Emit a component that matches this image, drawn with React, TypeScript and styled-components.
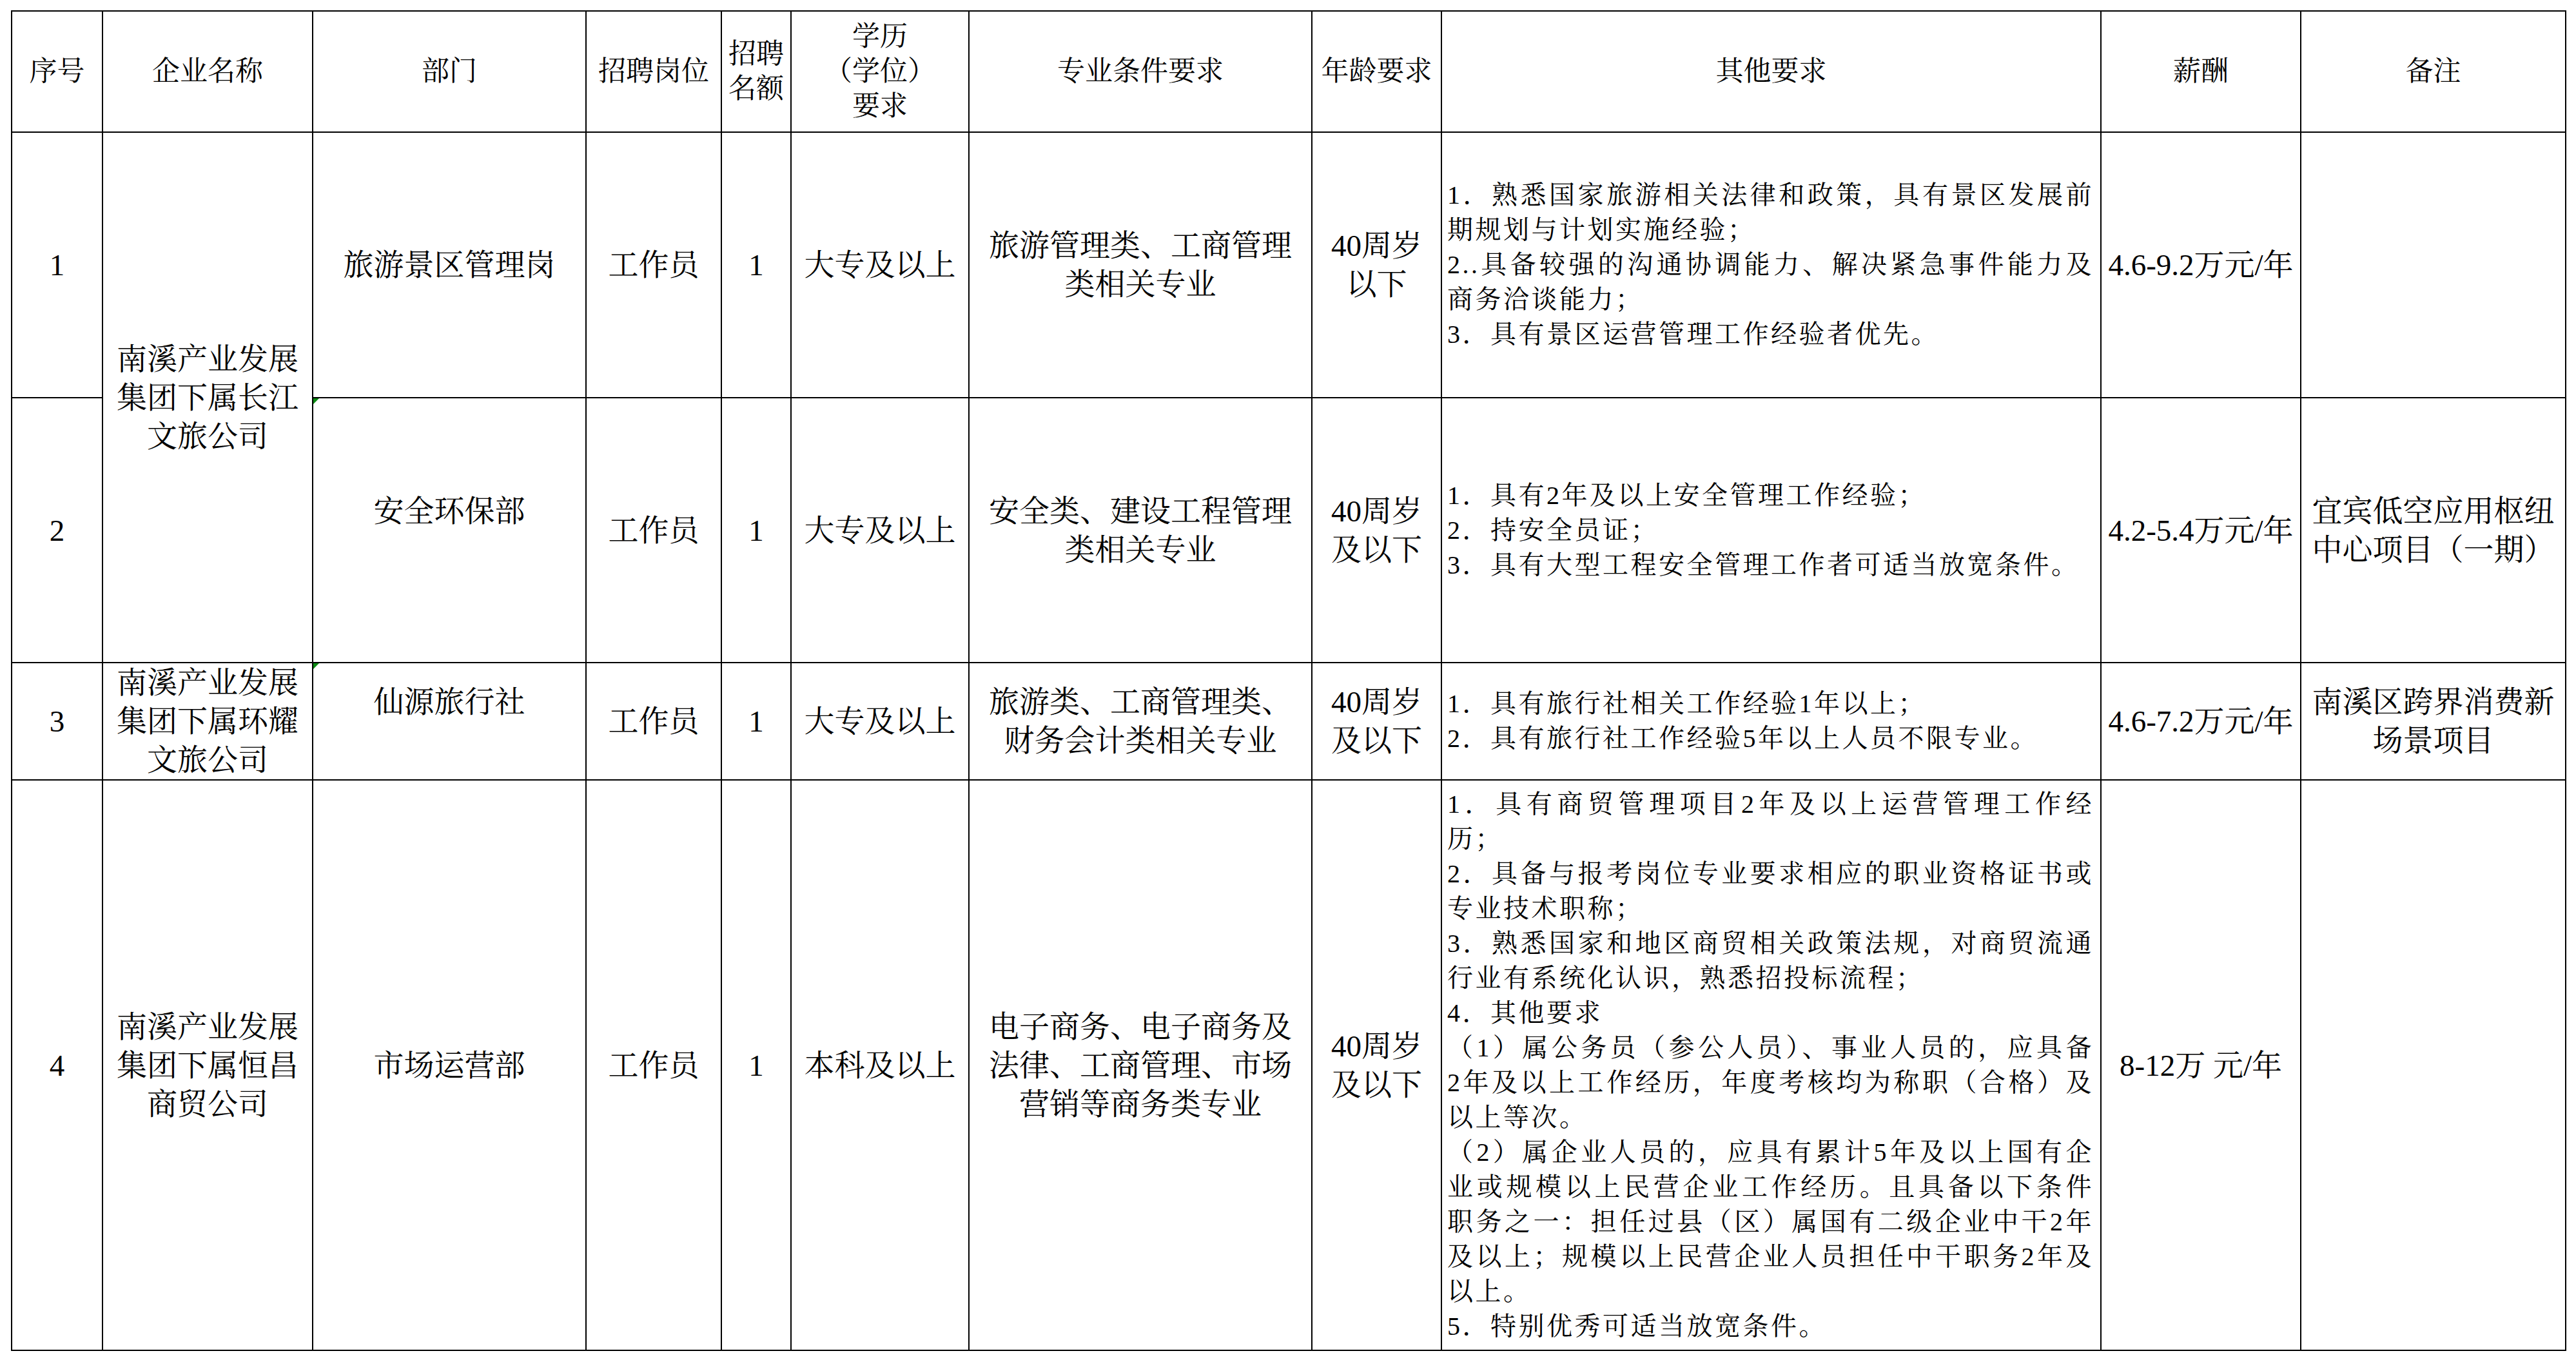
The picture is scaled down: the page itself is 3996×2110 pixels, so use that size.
import React from 'react';
import styled, { createGlobalStyle, css } from 'styled-components';

const GlobalStyle = createGlobalStyle`
  html, body {
    margin: 0;
    padding: 0;
    background: #fff;
  }
  body {
    font-family: 'Liberation Serif', 'Noto Serif CJK SC', 'Noto Sans CJK SC', serif;
    color: #000;
  }
`;

const Page = styled.div`
  width: 3996px;
  box-sizing: border-box;
  padding: 16px 17px;
`;

const Sheet = styled.table`
  border-collapse: collapse;
  table-layout: fixed;
  width: 3962px;
`;

const Row = styled.tr<{ $h: number }>`
  height: ${({ $h }) => $h}px;
`;

const HeadCell = styled.th`
  border: 2px solid #000;
  padding: 0;
  font-size: 43px;
  font-weight: 400;
  line-height: 54px;
  text-align: center;
  vertical-align: middle;
`;

const Cell = styled.td`
  position: relative;
  border: 2px solid #000;
  padding: 0 4px;
  font-size: 47px;
  font-weight: 400;
  line-height: 60px;
  text-align: center;
  vertical-align: middle;
`;

const ReqCell = styled(Cell)`
  padding: 0 10px 0 8px;
  font-size: 40px;
  line-height: 54px;
  letter-spacing: 3.5px;
  text-align: left;
`;

const Line = styled.div<{ $justify?: boolean }>`
  ${({ $justify }) =>
    $justify &&
    css`
      text-align: justify;
      text-align-last: justify;
    `}
`;

const Marker = styled.span`
  position: absolute;
  top: 0;
  left: 0;
  width: 0;
  height: 0;
  border-top: 9px solid #0b8a12;
  border-right: 9px solid transparent;
`;

const widths = [141, 326, 424, 210, 108, 276, 532, 201, 1023, 310, 411];

type Req = [string, boolean];

interface Job {
  no: string;
  company?: { lines: string[]; span: number };
  dept: string[];
  marked?: boolean;
  post: string;
  count: string;
  edu: string;
  major: string[];
  age: string[];
  reqs: Req[];
  salary: string;
  note: string[];
  height: number;
}

const jobs: Job[] = [
  {
    no: '1',
    company: { lines: ['南溪产业发展', '集团下属长江', '文旅公司'], span: 2 },
    dept: ['旅游景区管理岗'],
    post: '工作员',
    count: '1',
    edu: '大专及以上',
    major: ['旅游管理类、工商管理', '类相关专业'],
    age: ['40周岁', '以下'],
    reqs: [
      ['1．熟悉国家旅游相关法律和政策，具有景区发展前', true],
      ['期规划与计划实施经验；', false],
      ['2..具备较强的沟通协调能力、解决紧急事件能力及', true],
      ['商务洽谈能力；', false],
      ['3．具有景区运营管理工作经验者优先。', false],
    ],
    salary: '4.6-9.2万元/年',
    note: [],
    height: 412,
  },
  {
    no: '2',
    dept: ['安全环保部', '\u00a0'],
    marked: true,
    post: '工作员',
    count: '1',
    edu: '大专及以上',
    major: ['安全类、建设工程管理', '类相关专业'],
    age: ['40周岁', '及以下'],
    reqs: [
      ['1．具有2年及以上安全管理工作经验；', false],
      ['2．持安全员证；', false],
      ['3．具有大型工程安全管理工作者可适当放宽条件。', false],
    ],
    salary: '4.2-5.4万元/年',
    note: ['宜宾低空应用枢纽', '中心项目（一期）'],
    height: 411,
  },
  {
    no: '3',
    company: { lines: ['南溪产业发展', '集团下属环耀', '文旅公司'], span: 1 },
    dept: ['仙源旅行社', '\u00a0'],
    marked: true,
    post: '工作员',
    count: '1',
    edu: '大专及以上',
    major: ['旅游类、工商管理类、', '财务会计类相关专业'],
    age: ['40周岁', '及以下'],
    reqs: [
      ['1．具有旅行社相关工作经验1年以上；', false],
      ['2．具有旅行社工作经验5年以上人员不限专业。', false],
    ],
    salary: '4.6-7.2万元/年',
    note: ['南溪区跨界消费新', '场景项目'],
    height: 181,
  },
  {
    no: '4',
    company: { lines: ['南溪产业发展', '集团下属恒昌', '商贸公司'], span: 1 },
    dept: ['市场运营部'],
    post: '工作员',
    count: '1',
    edu: '本科及以上',
    major: ['电子商务、电子商务及', '法律、工商管理、市场', '营销等商务类专业'],
    age: ['40周岁', '及以下'],
    reqs: [
      ['1．具有商贸管理项目2年及以上运营管理工作经', true],
      ['历；', false],
      ['2．具备与报考岗位专业要求相应的职业资格证书或', true],
      ['专业技术职称；', false],
      ['3．熟悉国家和地区商贸相关政策法规，对商贸流通', true],
      ['行业有系统化认识，熟悉招投标流程；', false],
      ['4．其他要求', false],
      ['（1）属公务员（参公人员）、事业人员的，应具备', true],
      ['2年及以上工作经历，年度考核均为称职（合格）及', true],
      ['以上等次。', false],
      ['（2）属企业人员的，应具有累计5年及以上国有企', true],
      ['业或规模以上民营企业工作经历。且具备以下条件', true],
      ['职务之一：担任过县（区）属国有二级企业中干2年', true],
      ['及以上；规模以上民营企业人员担任中干职务2年及', true],
      ['以上。', false],
      ['5．特别优秀可适当放宽条件。', false],
    ],
    salary: '8-12万 元/年',
    note: [],
    height: 885,
  },
];

function Lines({ items }: { items: string[] }) {
  return (
    <>
      {items.map((text, i) => (
        <Line key={i}>{text}</Line>
      ))}
    </>
  );
}

export default function App() {
  return (
    <Page>
      <GlobalStyle />
      <Sheet>
        <colgroup>
          {widths.map((w, i) => (
            <col key={i} style={{ width: w }} />
          ))}
        </colgroup>
        <thead>
          <Row $h={188}>
            <HeadCell>序号</HeadCell>
            <HeadCell>企业名称</HeadCell>
            <HeadCell>部门</HeadCell>
            <HeadCell>招聘岗位</HeadCell>
            <HeadCell>
              <Lines items={['招聘', '名额']} />
            </HeadCell>
            <HeadCell>
              <Lines items={['学历', '（学位）', '要求']} />
            </HeadCell>
            <HeadCell>专业条件要求</HeadCell>
            <HeadCell>年龄要求</HeadCell>
            <HeadCell>其他要求</HeadCell>
            <HeadCell>薪酬</HeadCell>
            <HeadCell>备注</HeadCell>
          </Row>
        </thead>
        <tbody>
          {jobs.map((job) => (
            <Row key={job.no} $h={job.height}>
              <Cell>{job.no}</Cell>
              {job.company && (
                <Cell rowSpan={job.company.span}>
                  <Lines items={job.company.lines} />
                </Cell>
              )}
              <Cell>
                {job.marked && <Marker />}
                <Lines items={job.dept} />
              </Cell>
              <Cell>{job.post}</Cell>
              <Cell>{job.count}</Cell>
              <Cell>{job.edu}</Cell>
              <Cell>
                <Lines items={job.major} />
              </Cell>
              <Cell>
                <Lines items={job.age} />
              </Cell>
              <ReqCell>
                {job.reqs.map(([text, justify], i) => (
                  <Line key={i} $justify={justify}>
                    {text}
                  </Line>
                ))}
              </ReqCell>
              <Cell>{job.salary}</Cell>
              <Cell>
                <Lines items={job.note} />
              </Cell>
            </Row>
          ))}
        </tbody>
      </Sheet>
    </Page>
  );
}
